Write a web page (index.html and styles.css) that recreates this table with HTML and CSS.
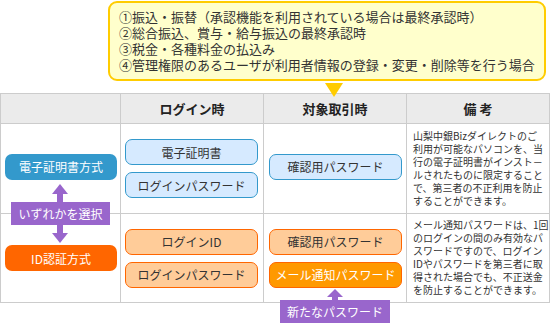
FILE: index.html
```html
<!DOCTYPE html>
<html lang="ja">
<head>
<meta charset="utf-8">
<link rel="stylesheet" href="styles.css">
</head>
<body>
<div class="page">
  <div class="callout">
    <p>①振込・振替（承認機能を利用されている場合は最終承認時）</p>
    <p>②総合振込、賞与・給与振込の最終承認時</p>
    <p>③税金・各種料金の払込み</p>
    <p>④管理権限のあるユーザが利用者情報の登録・変更・削除等を行う場合</p>
  </div>
  <div class="pointer"></div>

  <div class="grid">
    <div class="cell head"></div>
    <div class="cell head">ログイン時</div>
    <div class="cell head">対象取引時</div>
    <div class="cell head">備 考</div>

    <div class="cell method method-1"><div class="btn btn-blue">電子証明書方式</div></div>
    <div class="cell stack"><div class="box box-blue">電子証明書</div><div class="box box-blue">ログインパスワード</div></div>
    <div class="cell stack stack-1"><div class="box box-blue">確認用パスワード</div></div>
    <div class="cell note"><p>山梨中銀Bizダイレクトのご<br>利用が可能なパソコンを、当<br>行の電子証明書がインスト－<br>ルされたものに限定すること<br>で、第三者の不正利用を防止<br>することができます。</p></div>

    <div class="cell method"><div class="btn btn-orange">ID認証方式</div></div>
    <div class="cell stack"><div class="box box-peach">ログインID</div><div class="box box-peach">ログインパスワード</div></div>
    <div class="cell stack"><div class="box box-peach">確認用パスワード</div><div class="box box-mail">メール通知パスワード</div></div>
    <div class="cell note"><p>メール通知パスワードは、1回<br>のログインの間のみ有効なパ<br>スワードですので、ログイン<br>IDやパスワードを第三者に取<br>得された場合でも、不正送金<br>を防止することができます。</p></div>
  </div>

  <svg class="arrow arrow-up-1" width="16" height="18" viewBox="0 0 16 18"><polygon points="8,0 16,10 0,10" fill="#9966cc"/><rect x="5" y="9" width="6" height="9" fill="#9966cc"/></svg>
  <div class="tag tag-select">いずれかを選択</div>
  <svg class="arrow arrow-down-1" width="16" height="18" viewBox="0 0 16 18"><rect x="5" y="0" width="6" height="9" fill="#9966cc"/><polygon points="0,8 16,8 8,18" fill="#9966cc"/></svg>

  <svg class="arrow arrow-up-2" width="16" height="12" viewBox="0 0 16 12"><polygon points="8,0 16,8 0,8" fill="#9966cc"/><rect x="5" y="7" width="6" height="5" fill="#9966cc"/></svg>
  <div class="tag tag-new">新たなパスワード</div>
</div>
</body>
</html>
```

FILE: styles.css
```css
* { box-sizing: border-box; }
html, body { margin: 0; padding: 0; background: #fff; }
body {
  font-family: "Noto Sans CJK JP", "Noto Sans", sans-serif;
  color: #333;
}
.page {
  position: relative;
  width: 550px;
  height: 323px;
  overflow: hidden;
}
.callout {
  margin: 1px 0 0 108px;
  width: 438px;
  height: 80px;
  border: 2px solid #ffcc00;
  border-radius: 9px;
  background: #ffffcc;
  padding: 6px 0 0 9px;
}
.callout p {
  margin: 0;
  font-size: 13px;
  line-height: 16px;
  white-space: nowrap;
}
.pointer {
  position: absolute;
  left: 325px;
  top: 83px;
  width: 0;
  height: 0;
  border-left: 9px solid transparent;
  border-right: 9px solid transparent;
  border-top: 14px solid #ffcc00;
  z-index: 2;
}
.grid {
  margin-top: 12px;
  display: grid;
  grid-template-columns: 120px 143px 143px 143px;
  grid-template-rows: 30px 90px 89px;
  border-top: 1px solid #cccccc;
  border-left: 1px solid #cccccc;
  width: 550px;
}
.cell {
  border-right: 1px solid #cccccc;
  border-bottom: 1px solid #cccccc;
}
.head {
  background: #ebebeb;
  display: flex;
  align-items: center;
  justify-content: center;
  font-size: 13px;
  font-weight: bold;
  color: #222;
}
.method {
  display: flex;
  align-items: center;
  padding-left: 4px;
}
.method-1 { padding-bottom: 4px; }
.btn {
  width: 112px;
  height: 26px;
  border-radius: 7px;
  color: #fff;
  font-size: 12px;
  display: flex;
  align-items: center;
  justify-content: center;
}
.btn-blue { background: #3399cc; }
.btn-orange { background: #ff6600; }
.stack {
  display: flex;
  flex-direction: column;
  justify-content: center;
  gap: 7px;
  padding-left: 4px;
}
.stack + .stack { padding-left: 5px; }
.stack-1 { padding-bottom: 4px; }
.box {
  width: 133px;
  height: 26px;
  border-radius: 7px;
  border: 1px solid #3399cc;
  font-size: 12px;
  display: flex;
  align-items: center;
  justify-content: center;
  color: #333;
}
.box-blue { background: #d6eaff; border-color: #3399cc; }
.box-peach { background: #ffcc99; border-color: #ff6600; }
.box-mail { background: #ff9900; border-color: #ff6600; color: #fff; }
.note {
  display: flex;
  align-items: center;
  padding: 0 0 2px 6px;
  color: #333;
}
.note p {
  margin: 0;
  font-size: 10px;
  line-height: 13px;
  white-space: nowrap;
}
.arrow { position: absolute; display: block; }
.arrow-up-1 { left: 52px; top: 184px; }
.arrow-down-1 { left: 52px; top: 225px; }
.arrow-up-2 { left: 327px; top: 289px; }
.tag {
  position: absolute;
  background: #9966cc;
  color: #fff;
  font-size: 12px;
  display: flex;
  align-items: center;
  justify-content: center;
  height: 23px;
}
.tag-select { left: 11px; top: 202px; width: 99px; }
.tag-new { left: 280px; top: 300px; width: 110px; }
```
